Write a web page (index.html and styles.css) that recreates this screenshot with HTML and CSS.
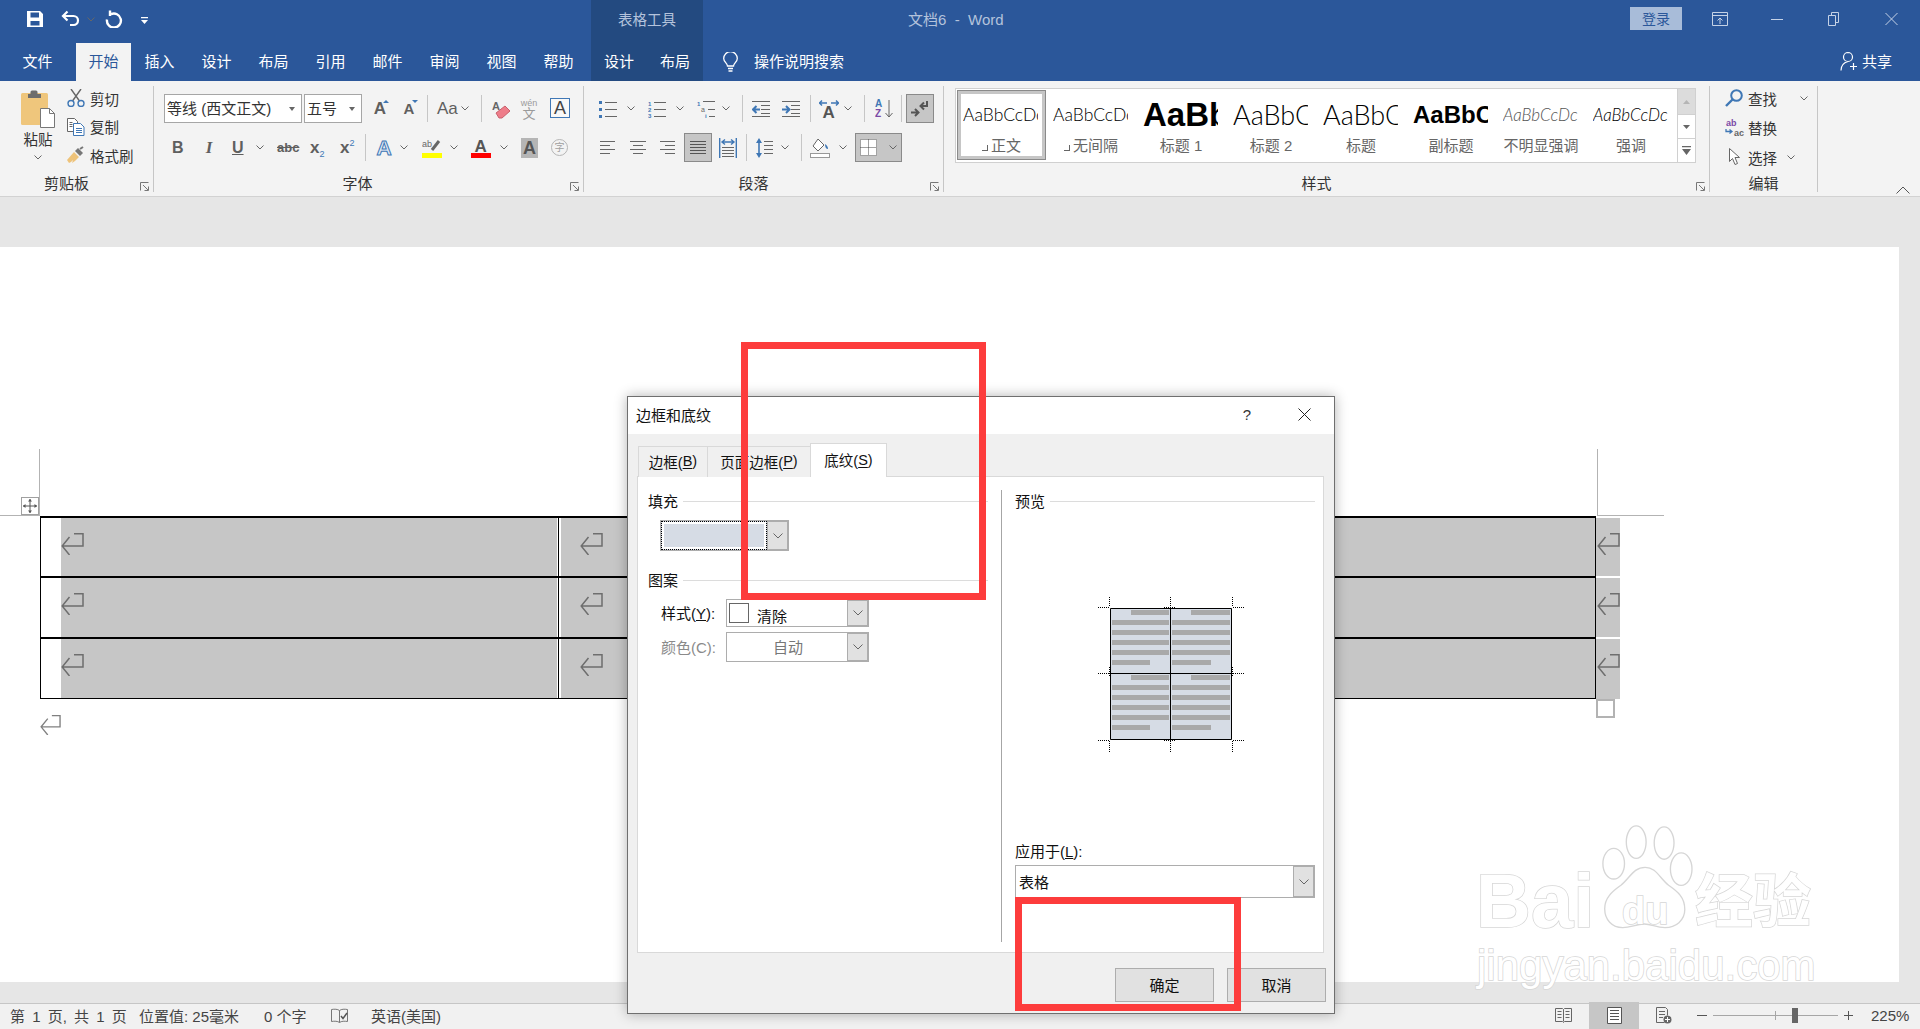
FILE: index.html
```html
<!DOCTYPE html>
<html lang="zh-CN">
<head>
<meta charset="utf-8">
<title>文档6 - Word</title>
<link rel="stylesheet" href="styles.css">
</head>
<body>
<header class="titlebar">
  <div class="qat">
    <svg class="qi-save" viewBox="0 0 16 16"><path fill="#fff" fill-rule="evenodd" d="M0 0h13l3 3v13H0zM3.5 1.5v5h8.500v-5zM3.500 10v4.500h9V10z"/></svg>
    <svg class="qi-undo" viewBox="0 0 19 17"><path fill="none" stroke="#fff" stroke-width="2.200" d="M6.500 1.500 2 6l4.500 4.500M2 6h10.500a4.500 4.500 0 0 1 0 9H9"/></svg>
    <svg class="chev chev-qat" viewBox="0 0 8 5"><path d="M.5.500 4 4 7.500.500"/></svg>
    <svg class="qi-redo" viewBox="0 0 18 18"><path fill="none" stroke="#fff" stroke-width="2.400" d="M6 4.200a7 7 0 1 1-4 5.300M5 .5v5.500"/></svg>
    <svg class="qi-more" viewBox="0 0 7 7"><path fill="#fff" d="M0 0h7v1.200H0zM0 3h7L3.500 7z"/></svg>
  </div>
  <div class="ctx-title">表格工具</div>
  <div class="doc-title">文档6 &nbsp;-&nbsp; Word</div>
  <div class="win">
    <button class="login">登录</button>
    <svg class="wi wi-disp" viewBox="0 0 16 16"><path fill="none" stroke="#c5d2e6" d="M.5 1.500h15v13H.5zM.5 4.500h15M8 13V7M5.500 9.500 8 7l2.500 2.500"/></svg>
    <svg class="wi wi-min" viewBox="0 0 12 16"><path stroke="#c5d2e6" d="M0 8.500h12"/></svg>
    <svg class="wi wi-res" viewBox="0 0 13 16"><path fill="none" stroke="#c5d2e6" d="M1.500 4.500h7v10h-7zM4.500 4.500v-3h7v10h-3"/></svg>
    <svg class="wi wi-close" viewBox="0 0 13 16"><path fill="none" stroke="#c5d2e6" d="M.5 2 12.500 14M12.500 2 .5 14"/></svg>
  </div>
</header>

<nav class="tabs">
  <a class="tab tab-file">文件</a>
  <a class="tab tab-active">开始</a>
  <a class="tab">插入</a>
  <a class="tab">设计</a>
  <a class="tab">布局</a>
  <a class="tab">引用</a>
  <a class="tab">邮件</a>
  <a class="tab">审阅</a>
  <a class="tab">视图</a>
  <a class="tab">帮助</a>
  <div class="ctx-tabs"><a class="ctx-tab">设计</a><a class="ctx-tab">布局</a></div>
  <svg class="bulb" viewBox="0 0 15 20"><path fill="none" stroke="#fff" stroke-width="1.300" d="M4.500 14c0-3-3.800-4-3.800-7.500a6.800 6.800 0 0 1 13.600 0C14.300 10 10.500 11 10.500 14zM5 16.500h5M5.500 19h4"/></svg>
  <span class="search">操作说明搜索</span>
  <div class="share">
    <svg class="share-ic" viewBox="0 0 17 20"><path fill="none" stroke="#fff" stroke-width="1.200" d="M8 1.500a4.500 4.500 0 0 1 0 9 4.500 4.500 0 0 1 0-9zM1 19.500c0-5 3-8 7-9M10 15.500h7M13.500 12v7"/></svg>
    <span>共享</span>
  </div>
</nav>

<section class="ribbon">
  <div class="group g-clip">
    <div class="clip-body">
      <div class="paste">
        <svg class="paste-ic" viewBox="0 0 34 38">
          <rect x="0" y="3" width="27" height="32" rx="1.500" fill="#efc67c"/>
          <path fill="#6d6d6d" d="M7 4h2.500V2a1.500 1.500 0 0 1 1.500-1.500h4A1.500 1.500 0 0 1 16.500 2v2H20v4H7z"/>
          <path fill="#fff" stroke="#777" d="M19.500 18.500h9l5 5v14h-14z"/>
          <path fill="none" stroke="#777" d="M28.500 18.500v5h5"/>
        </svg>
        <span class="paste-label">粘贴</span>
        <svg class="chev" viewBox="0 0 8 5"><path d="M.5.500 4 4 7.500.500"/></svg>
      </div>
      <div class="small-col">
        <div class="small-row">
          <svg class="sic" viewBox="0 0 18 18"><path fill="none" stroke="#666" stroke-width="1.400" d="M4 0l8.500 12M14 0 5.500 12"/><circle cx="4" cy="14.500" r="3" fill="none" stroke="#3f77b5" stroke-width="1.400"/><circle cx="14" cy="14.500" r="3" fill="none" stroke="#3f77b5" stroke-width="1.400"/></svg>
          <span>剪切</span>
        </div>
        <div class="small-row">
          <svg class="sic" viewBox="0 0 18 18"><path fill="#fff" stroke="#666" d="M.5.500h7l3 3v10H.5z"/><path fill="#fff" stroke="#3f77b5" d="M6.500 5.500h7l3.500 3.500v8.500H6.500z"/><path stroke="#3f77b5" d="M9 10.500h6M9 12.500h6M9 14.500h6"/><path stroke="#666" d="M2.500 4.500h3M2.500 6.500h3M2.500 8.500h3"/></svg>
          <span>复制</span>
        </div>
        <div class="small-row">
          <svg class="sic" viewBox="0 0 18 18"><path fill="#eec37a" d="M0 14 7 6l5 5-4 4-3 2 1-3-2 2-2 1z"/><path fill="#777" d="M8 5l3-3 5 5-3 3z"/><path stroke="#777" stroke-width="2" d="M13 3l3-2"/></svg>
          <span>格式刷</span>
        </div>
      </div>
    </div>
    <div class="glabel">剪贴板</div>
    <svg class="launch" viewBox="0 0 9 9"><path fill="none" stroke="#777" d="M.5 8.500v-8h8M3 3l5 5M8.500 4.500v4h-4"/></svg>
  </div>

  <div class="group g-font">
    <div class="rows">
      <div class="row">
        <div class="fcombo fc-name"><span>等线 (西文正文)</span><i class="tri"></i></div>
        <div class="fcombo fc-size"><span>五号</span><i class="tri"></i></div>
        <span class="gl w14 m11 gl-big">A<i class="mini-up"></i></span>
        <span class="gl w14 m15 gl-small">A<i class="mini-dn"></i></span>
        <i class="sep m11"></i>
        <span class="gl w18 m9 gl-aa">Aa</span>
        <svg class="chev m6" viewBox="0 0 8 5"><path d="M.5.500 4 4 7.500.500"/></svg>
        <i class="sep m12"></i>
        <svg class="ic w20 m10" viewBox="0 0 20 20"><text x="0" y="11" class="st-a">A</text><path fill="#ee7d8a" stroke="#c9606c" d="M4 14l9-7 5 5-8 7H7z"/></svg>
        <span class="wen m9"><small>wén</small>文</span>
        <span class="boxa m13">A</span>
      </div>
      <div class="row">
        <span class="gl gl-b w10 m8">B</span>
        <span class="gl gl-i w8 m23">I</span>
        <span class="gl gl-u w11 m19">U</span>
        <svg class="chev m13" viewBox="0 0 8 5"><path d="M.5.500 4 4 7.500.500"/></svg>
        <span class="gl-abc w20 m13">abc</span>
        <span class="gl-x w15 m13">x<sub>2</sub></span>
        <span class="gl-x w15 m15">x<sup>2</sup></span>
        <i class="sep m10"></i>
        <span class="a-fx w16 m10">A</span>
        <svg class="chev m8" viewBox="0 0 8 5"><path d="M.5.500 4 4 7.500.500"/></svg>
        <svg class="ic w20 m14" viewBox="0 0 20 20"><text x="0" y="9" class="st-ab">ab</text><path stroke="#666" stroke-width="3" d="M10 12 17 3"/><rect x="0" y="15" width="20" height="5" fill="#ffff00"/></svg>
        <svg class="chev m8" viewBox="0 0 8 5"><path d="M.5.500 4 4 7.500.500"/></svg>
        <svg class="ic w20 m13" viewBox="0 0 20 20"><text x="3.500" y="14" class="st-fc">A</text><rect x="0" y="15" width="20" height="5" fill="#ff0000"/></svg>
        <svg class="chev m9" viewBox="0 0 8 5"><path d="M.5.500 4 4 7.500.500"/></svg>
        <span class="a-shade m13">A</span>
        <span class="zi m13">字</span>
      </div>
    </div>
    <div class="glabel">字体</div>
    <svg class="launch" viewBox="0 0 9 9"><path fill="none" stroke="#777" d="M.5 8.500v-8h8M3 3l5 5M8.500 4.500v4h-4"/></svg>
  </div>

  <div class="group g-para">
    <div class="rows">
      <div class="row">
        <svg class="ic w18 m15" viewBox="0 0 18 18"><path fill="#3f77b5" d="M0 1h3v3H0zM0 8h3v3H0zM0 15h3v3H0z"/><path stroke="#666" d="M6 2.500h12M6 9.500h12M6 16.500h12"/></svg>
        <svg class="chev m10" viewBox="0 0 8 5"><path d="M.5.500 4 4 7.500.500"/></svg>
        <svg class="ic w18 m13" viewBox="0 0 18 18"><text x="0" y="5.500" class="st-n">1</text><text x="0" y="12" class="st-n">2</text><text x="0" y="18" class="st-n">3</text><path stroke="#666" d="M6 2.500h12M6 9.500h12M6 16.500h12"/></svg>
        <svg class="chev m10" viewBox="0 0 8 5"><path d="M.5.500 4 4 7.500.500"/></svg>
        <svg class="ic w18 m13" viewBox="0 0 18 18"><text x="0" y="5.500" class="st-n">1</text><text x="4" y="12" class="st-n2">a</text><text x="8" y="18" class="st-n">i</text><path stroke="#666" d="M6 1.500h12M11 9.500h7M12 16.500h6"/></svg>
        <svg class="chev m7" viewBox="0 0 8 5"><path d="M.5.500 4 4 7.500.500"/></svg>
        <i class="sep m12"></i>
        <svg class="ic w18 m9" viewBox="0 0 18 18"><path stroke="#666" d="M0 1.500h18M9 5.500h9M9 9.500h9M9 13.500h9M0 16.500h18"/><path fill="none" stroke="#3f77b5" stroke-width="2" d="M8 9.500H1M4.500 6 1 9.500 4.500 13"/></svg>
        <svg class="ic w18 m12" viewBox="0 0 18 18"><path stroke="#666" d="M0 1.500h18M9 5.500h9M9 9.500h9M9 13.500h9M0 16.500h18"/><path fill="none" stroke="#3f77b5" stroke-width="2" d="M0 9.500h7M4 6l3.500 3.500L4 13"/></svg>
        <i class="sep m10"></i>
        <svg class="ic w20 m8" viewBox="0 0 20 20"><text x="3.500" y="18.500" class="st-big">A</text><path fill="none" stroke="#3f77b5" stroke-width="1.500" d="M0 4h8M3 1.500.5 4 3 6.500M12 4h8M17 1.500 19.500 4 17 6.500"/></svg>
        <svg class="chev m5" viewBox="0 0 8 5"><path d="M.5.500 4 4 7.500.500"/></svg>
        <i class="sep m12"></i>
        <svg class="ic w18 m10" viewBox="0 0 18 20"><text x="0" y="8" class="st-az1">A</text><text x="0" y="18" class="st-az2">Z</text><path fill="none" stroke="#666" d="M14 1v17M10.500 14 14 18l3.500-4"/></svg>
        <i class="sep m8"></i>
        <span class="tog tog-p m4"><svg class="ic w18" viewBox="0 0 18 18"><path fill="none" stroke="#555" stroke-width="2" d="M9 6h7V1M16 6h-4M13 2.500 9.500 6 13 9.500M0 12.500h7M4 9l3.500 3.500L4 16"/></svg></span>
      </div>
      <div class="row">
        <svg class="ic w15 m16" viewBox="0 0 15 15"><path stroke="#666" d="M0 1.500h15M0 5.500h10M0 9.500h15M0 13.500h10"/></svg>
        <svg class="ic w16 m15" viewBox="0 0 16 15"><path stroke="#666" d="M0 1.500h16M3 5.500h10M0 9.500h16M3 13.500h10"/></svg>
        <svg class="ic w15 m14" viewBox="0 0 15 15"><path stroke="#666" d="M0 1.500h15M5 5.500h10M0 9.500h15M5 13.500h10"/></svg>
        <span class="tog tog-j m9"><svg class="ic w16" viewBox="0 0 16 15"><path stroke="#555" d="M0 1.500h16M0 4.500h16M0 7.500h16M0 10.500h16M0 13.500h16"/></svg></span>
        <svg class="ic w18 m7" viewBox="0 0 18 20"><path stroke="#3f77b5" stroke-width="1.400" fill="none" d="M.7 0v20M17.300 0v20M3 4h12M6 1.500 3 4l3 2.500M12 1.500 15 4l-3 2.500"/><path stroke="#666" d="M3 9.500h12M3 12.500h12M3 15.500h12M3 18.500h12"/></svg>
        <i class="sep m9"></i>
        <svg class="ic w17 m9" viewBox="0 0 17 20"><path fill="#3f77b5" d="M3 0l3 5H0zM3 20l3-5H0z"/><path stroke="#3f77b5" stroke-width="1.600" d="M3 4v12"/><path stroke="#666" d="M8 3.500h9M8 7.500h9M8 11.500h9M8 15.500h9"/></svg>
        <svg class="chev m8" viewBox="0 0 8 5"><path d="M.5.500 4 4 7.500.500"/></svg>
        <i class="sep m12"></i>
        <svg class="ic w20 m8" viewBox="0 0 20 20"><path fill="#fff" stroke="#666" d="M8 1l6 6-6 6-5-5z"/><path fill="#3f77b5" d="M15 6c2 1 3 3 3 5-2 0-3-2-3-5z"/><rect x=".5" y="15.500" width="19" height="4" fill="#fff" stroke="#999"/></svg>
        <svg class="chev m9" viewBox="0 0 8 5"><path d="M.5.500 4 4 7.500.500"/></svg>
        <span class="tog tog-b m8"><svg class="ic w17" viewBox="0 0 17 17"><rect width="17" height="17" fill="#fff"/><path fill="none" stroke="#444" stroke-dasharray="1 1" d="M.5.500h16v16H.5zM8.500.500v16M.5 8.500h16"/></svg><svg class="chev" viewBox="0 0 8 5"><path d="M.5.500 4 4 7.500.500"/></svg></span>
      </div>
    </div>
    <div class="glabel">段落</div>
    <svg class="launch" viewBox="0 0 9 9"><path fill="none" stroke="#777" d="M.5 8.500v-8h8M3 3l5 5M8.500 4.500v4h-4"/></svg>
  </div>

  <div class="group g-styles">
    <div class="gallery">
      <div class="style sel"><div class="pv pv-n">AaBbCcDc</div><div class="lab"><i class="rm"></i>正文</div></div>
      <div class="style"><div class="pv pv-n">AaBbCcDc</div><div class="lab"><i class="rm"></i>无间隔</div></div>
      <div class="style"><div class="pv pv-h1">AaBb</div><div class="lab">标题 1</div></div>
      <div class="style"><div class="pv pv-h2">AaBbC</div><div class="lab">标题 2</div></div>
      <div class="style"><div class="pv pv-h2">AaBbC</div><div class="lab">标题</div></div>
      <div class="style"><div class="pv pv-sub">AaBbC</div><div class="lab">副标题</div></div>
      <div class="style"><div class="pv pv-em pv-grey">AaBbCcDc</div><div class="lab">不明显强调</div></div>
      <div class="style"><div class="pv pv-em">AaBbCcDc</div><div class="lab">强调</div></div>
      <div class="gscroll">
        <span class="gs gs-up"><svg viewBox="0 0 7 4"><path fill="#b5b5b5" d="M3.500 0 7 4H0z"/></svg></span>
        <span class="gs gs-dn"><svg viewBox="0 0 7 4"><path fill="#666" d="M0 0h7L3.500 4z"/></svg></span>
        <span class="gs gs-more"><svg viewBox="0 0 9 9"><path fill="#666" d="M0 0h9v1.200H0zM0 3h9L4.500 9z"/></svg></span>
      </div>
    </div>
    <div class="glabel">样式</div>
    <svg class="launch" viewBox="0 0 9 9"><path fill="none" stroke="#777" d="M.5 8.500v-8h8M3 3l5 5M8.500 4.500v4h-4"/></svg>
  </div>

  <div class="group g-edit">
    <div class="edit-col">
      <div class="small-row">
        <svg class="sic" viewBox="0 0 18 18"><circle cx="11.500" cy="6.500" r="5.300" fill="none" stroke="#3f77b5" stroke-width="2"/><path stroke="#3f77b5" stroke-width="2.400" d="M7.500 10.500 1 17"/></svg>
        <span>查找</span><svg class="chev m18" viewBox="0 0 8 5"><path d="M.5.500 4 4 7.500.500"/></svg>
      </div>
      <div class="small-row">
        <svg class="sic sic-rep" viewBox="0 0 20 19"><text x="1" y="8" class="st-rp">ab</text><text x="9" y="18" class="st-rb">ac</text><path fill="none" stroke="#3f77b5" stroke-width="1.300" d="M1 11v2.500h6M4.500 11.500l2.500 2-2.500 2"/></svg>
        <span>替换</span>
      </div>
      <div class="small-row">
        <svg class="sic" viewBox="0 0 18 18"><path fill="#fff" stroke="#666" d="M4.500.500v13l3-3 2.500 6 2.500-1-2.500-6h4.500z"/></svg>
        <span>选择</span><svg class="chev m5" viewBox="0 0 8 5"><path d="M.5.500 4 4 7.500.500"/></svg>
      </div>
    </div>
    <div class="glabel">编辑</div>
  </div>
  <svg class="collapse" viewBox="0 0 14 8"><path fill="none" stroke="#555" d="M.5 7.500 7 1l6.500 6.500"/></svg>
</section>

<main class="canvas">
  <div class="page">
    <i class="mark mark-lv"></i><i class="mark mark-lh"></i>
    <i class="mark mark-rv"></i><i class="mark mark-rh"></i>
    <span class="move"><svg viewBox="0 0 14 14"><path fill="none" stroke="#555" d="M7 0v14M0 7h14"/><path fill="#555" d="M7 0l2 2.500H5zM7 14l2-2.500H5zM0 7l2.500-2v4zM14 7l-2.500-2v4z"/></svg></span>
    <div class="tbl">
      <div class="trow r1">
        <div class="cell c1"><div class="shade"><svg class="ret" viewBox="0 0 23 22"><path d="M13 .7h9V13H1.500M8.500 4 1.200 13l7.300 9"/></svg></div></div>
        <div class="cell c2"><div class="shade"><svg class="ret" viewBox="0 0 23 22"><path d="M13 .7h9V13H1.500M8.500 4 1.200 13l7.300 9"/></svg></div></div>
        <div class="cell c3"><div class="shade"></div></div>
        <div class="endc"><svg class="ret" viewBox="0 0 23 22"><path d="M13 .7h9V13H1.500M8.500 4 1.200 13l7.300 9"/></svg></div>
      </div>
      <div class="trow r2">
        <div class="cell c1"><div class="shade"><svg class="ret" viewBox="0 0 23 22"><path d="M13 .7h9V13H1.500M8.500 4 1.200 13l7.300 9"/></svg></div></div>
        <div class="cell c2"><div class="shade"><svg class="ret" viewBox="0 0 23 22"><path d="M13 .7h9V13H1.500M8.500 4 1.200 13l7.300 9"/></svg></div></div>
        <div class="cell c3"><div class="shade"></div></div>
        <div class="endc"><svg class="ret" viewBox="0 0 23 22"><path d="M13 .7h9V13H1.500M8.500 4 1.200 13l7.300 9"/></svg></div>
      </div>
      <div class="trow r3">
        <div class="cell c1"><div class="shade"><svg class="ret" viewBox="0 0 23 22"><path d="M13 .7h9V13H1.500M8.500 4 1.200 13l7.300 9"/></svg></div></div>
        <div class="cell c2"><div class="shade"><svg class="ret" viewBox="0 0 23 22"><path d="M13 .7h9V13H1.500M8.500 4 1.200 13l7.300 9"/></svg></div></div>
        <div class="cell c3"><div class="shade"></div></div>
        <div class="endc"><svg class="ret" viewBox="0 0 23 22"><path d="M13 .7h9V13H1.500M8.500 4 1.200 13l7.300 9"/></svg></div>
      </div>
      <i class="resize"></i>
    </div>
    <svg class="ret ret-after" viewBox="0 0 23 22"><path d="M13 .7h9V13H1.500M8.500 4 1.200 13l7.300 9"/></svg>
  </div>
</main>

<footer class="status">
  <span class="st st1">第 1 页, 共 1 页</span>
  <span class="st st2">位置值: 25毫米</span>
  <span class="st st3">0 个字</span>
  <svg class="st-proof" viewBox="0 0 18 16"><path fill="none" stroke="#777" d="M8.500 2.500c-2-1.500-5-1.500-8-1v12c3-.5 6-.5 8 1 2-1.500 5-1.500 8-1v-12c-3-.5-6-.5-8 1zM8.500 2.500v12"/><path fill="none" stroke="#555" stroke-width="1.500" d="M10 8l2 2.500L16 5"/></svg>
  <span class="st st4">英语(美国)</span>
  <div class="st-right">
    <svg class="vi vi-read" viewBox="0 0 17 17"><path fill="none" stroke="#666" d="M.5 1.500h7l1 1 1-1h7v13h-7l-1 1-1-1h-7zM8.500 2.500v12M2.500 4.500h4M2.500 7.500h4M2.500 10.500h4M10.500 4.500h4M10.500 7.500h4M10.500 10.500h4"/></svg>
    <span class="vbtn"><svg class="vi" viewBox="0 0 17 17"><path fill="#fff" stroke="#555" d="M1.500.5h14v16h-14z"/><path stroke="#555" d="M4 3.500h9M4 6.500h9M4 9.500h9M4 12.500h9"/></svg></span>
    <svg class="vi vi-web" viewBox="0 0 16 17"><path fill="none" stroke="#666" d="M.5.500h9l2 2v6M.5.500v15h8M3 4.500h6M3 7.500h6M3 10.500h4"/><circle cx="11.500" cy="12.500" r="4" fill="#666"/><path stroke="#fff" d="M9 12.500h5M11.500 10v5"/></svg>
    <span class="z-minus"></span>
    <div class="z-track"><i class="z-mid"></i><i class="z-thumb"></i></div>
    <span class="z-plus"></span>
    <span class="z-val">225%</span>
  </div>
</footer>

<div class="watermark" aria-hidden="true">
  <svg class="wm-paw" viewBox="0 0 100 120">
    <g fill="#fff" stroke="#d6d6d6" stroke-width="1.500">
      <ellipse cx="13" cy="43" rx="12" ry="17"/>
      <ellipse cx="38" cy="19" rx="11" ry="18"/>
      <ellipse cx="69" cy="20" rx="11" ry="18"/>
      <ellipse cx="88" cy="49" rx="12" ry="18"/>
      <path d="M48 47c12 0 16 12 26 20 10 7 18 13 18 27 0 12-10 20-22 20-10 0-15-4-23-4-9 0-15 4-24 4C11 114 3 105 3 93c0-12 8-19 18-26 10-8 14-20 27-20z"/>
    </g>
  </svg>
  <span class="wm-bai">Bai</span>
  <span class="wm-du">du</span>
  <span class="wm-cn">经验</span>
  <span class="wm-url">jingyan.baidu.com</span>
</div>

<section class="dialog" role="dialog">
  <div class="dlg-title">
    <span>边框和底纹</span>
    <span class="dlg-help">?</span>
    <svg class="dlg-x" viewBox="0 0 13 13"><path fill="none" stroke="#222" d="M.5.500 12.500 12.500M12.500.500.5 12.500"/></svg>
  </div>
  <div class="dlg-tabs">
    <span class="dtab dtab-1">边框(<u>B</u>)</span>
    <span class="dtab dtab-2">页面边框(<u>P</u>)</span>
    <span class="dtab dtab-3">底纹(<u>S</u>)</span>
  </div>
  <div class="panel">
    <div class="p-left">
      <div class="sect"><span>填充</span><i></i></div>
      <div class="fill-combo"><span class="fill-swatch"></span><span class="drop"><svg class="dchev" viewBox="0 0 10 6"><path d="M.5.500 5 5 9.500.500"/></svg></span></div>
      <div class="sect sect-2"><span>图案</span><i></i></div>
      <div class="frow frow-style">
        <label>样式(<u>Y</u>):</label>
        <div class="combo combo-style"><i class="box"></i><span class="combo-text">清除</span><span class="drop"><svg class="dchev" viewBox="0 0 10 6"><path d="M.5.500 5 5 9.500.500"/></svg></span></div>
      </div>
      <div class="frow frow-color">
        <label class="dis">颜色(C):</label>
        <div class="combo combo-color"><span class="combo-auto">自动</span><span class="drop"><svg class="dchev" viewBox="0 0 10 6"><path d="M.5.500 5 5 9.500.500"/></svg></span></div>
      </div>
    </div>
    <div class="p-right">
      <div class="sect"><span>预览</span><i></i></div>
      <svg class="preview" viewBox="0 0 146 156">
        <rect x="12.500" y="11.500" width="121" height="131" fill="#d6dce5"/>
        <path fill="#a9a9a9" d="M33 13h38v5H33zM14 23h57v5H14zM14 33h57v5H14zM14 43h57v5H14zM14 53h57v5H14zM14 63h38v5H14zM93 13h39v5H93zM74 23h58v5H74zM74 33h58v5H74zM74 43h58v5H74zM74 53h58v5H74zM74 63h39v5H74zM33 78h38v5H33zM14 88h57v5H14zM14 98h57v5H14zM14 108h57v5H14zM14 118h57v5H14zM14 128h38v5H14zM93 78h39v5H93zM74 88h58v5H74zM74 98h58v5H74zM74 108h58v5H74zM74 118h58v5H74zM74 128h39v5H74z"/>
        <path fill="none" stroke="#000" d="M12.500 11.500h121v131h-121zM72.500 11.500v131M12.500 76.500h121"/>
        <path fill="none" stroke="#000" stroke-dasharray="1 1" d="M0 10.500h11M11.500 0v10M66 10.500h11M72.500 0v10M135 10.500h11M134.500 0v10M0 76.500h11M11.500 70v10M135 76.500h11M134.500 70v10M0 143.500h11M11.500 144v11M66 143.500h11M72.500 144v11M135 143.500h11M134.500 144v11"/>
      </svg>
      <label class="apply-label">应用于(<u>L</u>):</label>
      <div class="combo combo-apply"><span class="combo-text2">表格</span><span class="drop"><svg class="dchev" viewBox="0 0 10 6"><path d="M.5.500 5 5 9.500.500"/></svg></span></div>
    </div>
  </div>
  <div class="dlg-foot">
    <button class="btn">确定</button>
    <button class="btn">取消</button>
  </div>
</section>

<i class="redbox redbox-1"></i>
<i class="redbox redbox-2"></i>
</body>
</html>
```
FILE: styles.css
```css
* { box-sizing: border-box; }
html, body { margin: 0; padding: 0; }
body {
  position: relative;
  width: 1920px;
  height: 1029px;
  overflow: hidden;
  display: flex;
  flex-direction: column;
  font-family: "Liberation Sans", "Noto Sans CJK SC", sans-serif;
  font-size: 15px;
  color: #333;
  background: #e6e6e6;
}
svg { display: block; flex: none; }
i { font-style: normal; }

/* title bar */
.titlebar { height: 43px; background: #2b579a; display: flex; align-items: stretch; flex: none; color: #b4c3dc; font-size: 14.500px; }
.qat { width: 591px; display: flex; align-items: center; padding-left: 27px; }
.qi-save { width: 16px; height: 16px; margin-top: -6px; }
.qi-undo { width: 19px; height: 17px; margin-left: 18px; margin-top: -6px; }
.chev-qat { margin-left: 7px; margin-top: -4px; }
.chev-qat path { stroke: #8fa6c8; }
.qi-redo { width: 18px; height: 18px; margin-left: 10px; margin-top: -6px; }
.qi-more { width: 7px; height: 7px; margin-left: 18px; margin-top: -2px; }
.ctx-title { width: 112px; background: #234a80; display: flex; align-items: center; justify-content: center; padding-bottom: 6px; }
.doc-title { margin-left: 205px; display: flex; align-items: center; padding-bottom: 6px; white-space: pre; font-size: 15px; }
.win { margin-left: auto; padding-right: 22px; display: flex; align-items: center; padding-bottom: 6px; }
.login { width: 52px; height: 23px; border: 0; padding: 0 0 2px; background: #a8bcd9; color: #2b579a; font: inherit; font-size: 14px; }
.wi { height: 16px; }
.wi-disp { width: 16px; margin-left: 30px; }
.wi-min { width: 12px; margin-left: 43px; }
.wi-res { width: 13px; margin-left: 44px; }
.wi-close { width: 13px; margin-left: 45px; }

/* tabs */
.tabs { height: 38px; background: #2b579a; display: flex; flex: none; color: #fff; }
.tab { width: 57px; display: flex; align-items: center; justify-content: center; padding-bottom: 3px; }
.tab-file { width: 57px; margin-left: 9px; margin-right: 10px; }
.tab-active { width: 55px; background: #f3f3f3; color: #2b579a; margin-right: 0; }
.ctx-tabs { display: flex; width: 112px; margin-left: 4px; background: #234a80; }
.ctx-tab { width: 56px; display: flex; align-items: center; justify-content: center; padding-bottom: 3px; }
.bulb { width: 15px; height: 20px; margin-left: 20px; margin-top: 9px; }
.search { margin-left: 16px; align-self: center; font-size: 15px; padding-bottom: 3px; }
.share { margin-left: auto; padding-right: 28px; display: flex; align-items: center; gap: 5px; padding-bottom: 3px; }
.share-ic { width: 17px; height: 20px; }

/* ribbon */
.ribbon { position: relative; height: 116px; background: #f3f3f3; border-bottom: 1px solid #d2d2d2; display: flex; flex: none; padding-top: 5px; padding-bottom: 4px; font-size: 14.500px; }
.group { position: relative; display: flex; flex-direction: column; height: 106px; border-right: 1px solid #c6c6c6; }
.g-clip { width: 154px; }
.g-font { width: 430px; }
.g-para { width: 360px; }
.g-styles { width: 766px; }
.g-edit { width: 108px; }
.glabel { height: 14px; line-height: 12px; text-align: center; flex: none; margin-top: auto; color: #333; font-size: 15px; }
.g-clip .glabel { padding-right: 20px; }
.g-font .glabel { padding-right: 22px; }
.g-para .glabel { padding-right: 20px; }
.g-styles .glabel { padding-right: 20px; }
.launch { position: absolute; right: 4px; bottom: 1px; width: 9px; height: 9px; }
.collapse { position: absolute; left: 1896px; top: 105px; width: 14px; height: 8px; }

.clip-body { display: flex; }
.paste { width: 58px; margin-left: 9px; padding-top: 4px; display: flex; flex-direction: column; align-items: center; }
.paste-ic { width: 34px; height: 38px; }
.paste-label { margin-top: 3px; line-height: 18px; }
.paste .chev { margin-top: 6px; }
.small-col { display: flex; flex-direction: column; gap: 4.500px; }
.edit-col { padding-top: 0; padding-left: 15px; display: flex; flex-direction: column; gap: 5.500px; }
.small-row { height: 24px; display: flex; align-items: center; gap: 5px; white-space: nowrap; }
.sic { width: 18px; height: 18px; }
.sic-rep { width: 20px; height: 19px; margin-right: -2px; }

.chev { width: 8px; height: 5px; }
.chev path, .dchev path { fill: none; stroke: #666; }

.rows { padding-top: 8px; display: flex; flex-direction: column; gap: 10px; }
.row { height: 29px; display: flex; align-items: center; padding-left: 10px; }
.g-para .row { padding-left: 0; }
.sep { width: 1px; height: 27px; background: #c6c6c6; flex: none; }
.w8 { width: 8px; } .w10 { width: 10px; } .w11 { width: 11px; } .w14 { width: 14px; } .w15 { width: 15px; }
.w16 { width: 16px; } .w17 { width: 17px; } .w18 { width: 18px; } .w20 { width: 20px; }
.m4 { margin-left: 4px; } .m5 { margin-left: 5px; } .m6 { margin-left: 6px; } .m7 { margin-left: 7px; }
.m8 { margin-left: 8px; } .m9 { margin-left: 9px; } .m10 { margin-left: 10px; } .m11 { margin-left: 11px; }
.m12 { margin-left: 12px; } .m13 { margin-left: 13px; } .m14 { margin-left: 14px; } .m15 { margin-left: 15px; }
.m16 { margin-left: 16px; } .m18 { margin-left: 18px; } .m19 { margin-left: 19px; } .m23 { margin-left: 23px; }

.fcombo { height: 29px; background: #fff; border: 1px solid #a6a6a6; display: flex; align-items: center; padding: 0 6px 2px 2px; justify-content: space-between; white-space: nowrap; font-size: 15px; }
.fc-name { width: 138px; margin-right: 2px; }
.fc-size { width: 58px; }
.tri { width: 0; height: 0; margin-top: 2px; border-left: 3.500px solid transparent; border-right: 3.500px solid transparent; border-top: 4px solid #666; }
.gl { position: relative; display: block; text-align: center; color: #5f5f5f; font-weight: bold; line-height: 20px; }
.gl-big { font-size: 17px; }
.gl-small { font-size: 15px; }
.mini-up, .mini-dn { position: absolute; right: -2px; top: 1px; width: 0; height: 0; border-left: 3px solid transparent; border-right: 3px solid transparent; }
.mini-up { border-bottom: 3px solid #3f77b5; }
.mini-dn { border-top: 3px solid #3f77b5; }
.gl-aa { font-weight: normal; font-size: 17px; white-space: nowrap; }
.wen { width: 16px; display: flex; flex-direction: column; align-items: center; color: #9a9a9a; font-size: 13px; line-height: 11px; }
.wen small { font-size: 9px; line-height: 9px; }
.boxa { width: 20px; height: 20px; border: 1px solid #3f77b5; background: #f8f8f8; color: #444; text-align: center; font-size: 18px; line-height: 18px; margin-top: -2px; }
.gl-b { font-size: 16px; font-family: "Liberation Sans", sans-serif; }
.gl-i { font-size: 17px; font-family: "Liberation Serif", serif; font-style: italic; }
.gl-u { font-size: 16px; text-decoration: underline; }
.gl-abc { display: block; font-size: 13px; color: #5f5f5f; font-weight: bold; text-decoration: line-through; text-align: center; }
.gl-x { display: block; color: #5f5f5f; font-weight: bold; font-size: 17px; line-height: 20px; white-space: nowrap; }
.gl-x sub, .gl-x sup { font-size: 9px; color: #3f77b5; font-weight: normal; line-height: 0; }
.a-fx { display: block; font-size: 21px; font-weight: bold; color: #dfeaf6; line-height: 20px; text-align: center; -webkit-text-stroke: 1px #3f77b5; }
.a-shade { width: 17px; height: 20px; background: #b5b5b5; color: #555; font-weight: bold; font-size: 18px; line-height: 20px; text-align: center; }
.zi { width: 17px; height: 17px; border: 1px solid #b5b5b5; border-radius: 50%; color: #a0a0a0; font-size: 10px; line-height: 15px; text-align: center; }
.st-a { font: bold 11px "Liberation Sans", sans-serif; fill: #666; }
.st-ab { font: 9px "Liberation Sans", sans-serif; fill: #666; }
.st-fc { font: bold 17px "Liberation Sans", sans-serif; fill: #555; }
.st-n { font: bold 6px "Liberation Sans", sans-serif; fill: #3f77b5; }
.st-n2 { font: 7px "Liberation Sans", sans-serif; fill: #666; }
.st-big { font: bold 17px "Liberation Sans", sans-serif; fill: #555; }
.st-az1 { font: bold 10px "Liberation Sans", sans-serif; fill: #3f77b5; }
.st-az2 { font: bold 10px "Liberation Sans", sans-serif; fill: #7b4aa6; }
.st-rp { font: bold 9px "Liberation Sans", sans-serif; fill: #7b4aa6; }
.st-rb { font: bold 9px "Liberation Sans", sans-serif; fill: #666; }

.tog { height: 29px; background: #c6c6c6; border: 1px solid #8a8a8a; display: flex; align-items: center; justify-content: center; flex: none; }
.tog-p, .tog-j { width: 28px; }
.tog-b { width: 47px; gap: 12px; }

/* gallery */
.gallery { margin: 2px 0 0 11px; width: 741px; height: 75px; background: #fff; border: 1px solid #d0d0d0; display: flex; }
.style { width: 90px; height: 70px; margin-top: 1px; padding: 0 7px; overflow: hidden; flex: none; }
.style.sel { border: 4px solid #c6c6c6; outline: 1px solid #8a8a8a; outline-offset: -1px; padding: 0 2px; margin-left: 1px; width: 89px; height: 70px; }
.pv { height: 46px; width: 75px; line-height: 50px; overflow: hidden; white-space: nowrap; color: #000; font-family: Lato, "Liberation Sans", sans-serif; font-weight: 300; }
.sel .pv { height: 42px; line-height: 42px; width: 75px; }
.pv-n { font-size: 17.500px; }
.pv-h1 { font-family: "Liberation Sans", sans-serif; font-size: 33px; font-weight: bold; }
.pv-h2 { font-size: 27px; }
.pv-sub { font-family: "Liberation Sans", sans-serif; font-size: 24px; font-weight: bold; }
.pv-em { font-size: 17px; font-style: italic; }
.pv-grey { color: #555; }
.lab { height: 20px; line-height: 18px; text-align: center; color: #666; display: flex; justify-content: center; align-items: center; gap: 3px; white-space: nowrap; font-size: 15px; }
.rm { width: 6px; height: 6px; border-right: 1px solid #666; border-bottom: 1px solid #666; margin-top: 3px; }
.gscroll { width: 18px; margin-left: auto; display: flex; flex-direction: column; border-left: 1px solid #d0d0d0; flex: none; }
.gs { display: flex; align-items: center; justify-content: center; border-bottom: 1px solid #d0d0d0; }
.gs svg { width: 7px; height: 4px; }
.gs-up { height: 26px; background: #dcdcdc; }
.gs-dn { height: 24px; }
.gs-more { height: 23px; border-bottom: 0; }
.gs-more svg { width: 9px; height: 9px; }

/* canvas & page */
.canvas { flex: 1; padding-top: 50px; background: #e6e6e6; min-height: 0; }
.page { position: relative; width: 1899px; height: 735px; background: #fff; padding: 269px 0 0 40px; }
.mark { position: absolute; background: #b3b3b3; }
.mark-lv { left: 39px; top: 202px; width: 1px; height: 66px; }
.mark-lh { left: 0; top: 268px; width: 40px; height: 1px; }
.mark-rv { left: 1597px; top: 202px; width: 1px; height: 66px; }
.mark-rh { left: 1597px; top: 268px; width: 67px; height: 1px; }
.move { position: absolute; left: 21px; top: 250px; width: 18px; height: 18px; background: #fff; border: 1px solid #a0a0a0; padding: 1px; }
.move svg { width: 14px; height: 14px; }
.tbl { position: relative; width: 1580px; }
.trow { display: grid; grid-template-columns: 519px 519px 518px 24px; }
.r1 { height: 60px; }
.r2 { height: 61px; }
.r3 { height: 61px; }
.cell { border-top: 2px solid #000; border-right: 1px solid #000; background: #fff; display: flex; }
.r3 .cell { border-bottom: 1px solid #000; }
.c1 { border-left: 1px solid #000; padding-left: 20px; }
.shade { flex: 1; background: #c6c6c6; margin-right: 1px; padding-top: 15px; }
.c2 .shade { margin-left: 2px; padding-left: 19px; }
.c3 .shade { margin-left: 2px; margin-right: 0; }
.ret { width: 23px; height: 22px; }
.ret path { fill: none; stroke: #6e6e6e; stroke-width: 1.500; }
.endc { margin-top: 2px; background: #c6c6c6; padding: 15px 0 0 1px; overflow: hidden; }
.r3 .endc { height: 60px; }
.resize { position: absolute; left: 1556px; top: 183px; width: 19px; height: 19px; background: #fff; border: 2px solid #b3b3b3; }
.ret-after { width: 21px; height: 20px; margin-top: 17px; }
.ret-after path { stroke: #808080; }

/* status bar */
.status { height: 26px; flex: none; background: #f1f1f1; border-top: 1px solid #c6c6c6; display: flex; align-items: center; padding: 0 0 2px 10px; font-size: 15px; color: #444; white-space: pre; }
.st1 { width: 129px; word-spacing: 3px; }
.st2 { width: 125px; }
.st3 { width: 67px; }
.st-proof { width: 18px; height: 16px; margin-right: 22px; }
.st-right { margin-left: auto; padding-right: 10px; display: flex; align-items: center; height: 100%; }
.vi { width: 17px; height: 17px; }
.vbtn { width: 50px; height: 27px; background: #c6c6c6; margin-left: 17px; display: flex; align-items: center; justify-content: center; }
.vi-web { width: 16px; margin-left: 17px; }
.z-minus { width: 10px; height: 1px; background: #555; margin-left: 25px; }
.z-track { position: relative; width: 125px; height: 1px; background: #a6a6a6; margin-left: 6px; }
.z-mid { position: absolute; left: 62px; top: -4px; width: 1px; height: 9px; background: #a6a6a6; }
.z-thumb { position: absolute; left: 79px; top: -7px; width: 6px; height: 15px; background: #666; }
.z-plus { position: relative; width: 9px; height: 1px; background: #555; margin-left: 6px; }
.z-plus::after { content: ""; position: absolute; left: 4px; top: -4px; width: 1px; height: 9px; background: #555; }
.z-val { margin-left: 18px; width: 39px; }

/* watermark */
.watermark { position: absolute; left: 1476px; top: 825px; width: 340px; height: 165px; pointer-events: none; }
.wm-paw { position: absolute; left: 125px; top: 0; width: 92px; height: 108px; }
.wm-bai, .wm-du, .wm-cn, .wm-url { position: absolute; color: #fff; -webkit-text-stroke: 1.500px #d6d6d6; paint-order: stroke fill; white-space: nowrap; }
.wm-bai { left: 0; top: 36px; font-size: 76px; line-height: 80px; font-weight: bold; }
.wm-du { left: 146px; top: 66px; font-size: 38px; line-height: 40px; font-weight: bold; }
.wm-cn { left: 219px; top: 42px; font-size: 58px; line-height: 70px; font-weight: bold; }
.wm-url { left: 1px; top: 116px; font-size: 42px; line-height: 50px; }

/* dialog */
.dialog { position: absolute; z-index: 0; left: 627px; top: 396px; width: 708px; height: 618px; background: #f0f0f0; border: 1px solid #6f6f6f; box-shadow: 0 0 12px rgba(0, 0, 0, .3); display: flex; flex-direction: column; color: #111; font-size: 14.500px; }
.dlg-title { height: 37px; background: #fff; display: flex; align-items: center; padding: 0 0 2px 8px; flex: none; font-size: 15px; }
.dlg-help { margin-left: auto; color: #333; font-size: 15px; }
.dlg-x { width: 13px; height: 13px; margin-left: 47px; margin-right: 23px; }
.dlg-tabs { height: 43px; padding-left: 10px; display: flex; align-items: flex-end; flex: none; position: relative; z-index: 1; margin-bottom: -1px; }
.dtab { display: flex; align-items: center; justify-content: center; white-space: pre; height: 31px; padding-bottom: 2px; background: #f0f0f0; border: 1px solid #d9d9d9; border-bottom: 0; border-left-width: 0; }
.dtab u { text-underline-offset: 2px; }
.dtab-1 { width: 70px; border-left-width: 1px; }
.dtab-2 { width: 103px; }
.dtab-3 { width: 77px; height: 34px; background: #fff; border-left-width: 1px; margin-left: -1px; }
.panel { margin-left: 9px; width: 687px; height: 477px; background: #fff; border: 1px solid #d9d9d9; padding-top: 13px; padding-bottom: 10px; display: grid; grid-template-columns: 363px 1fr; flex: none; }
.p-left { padding-left: 10px; padding-right: 13px; }
.p-right { border-left: 1px solid #a6a6a6; padding: 0 9px 0 13px; }
.sect { height: 22px; display: flex; align-items: center; gap: 5px; font-size: 15px; }
.sect span { margin-bottom: 2px; }
.sect i { flex: 1; height: 1px; background: #dcdcdc; }
.sect-2 { margin-top: 18px; }
.fill-combo { margin: 8px 0 0 12px; width: 129px; height: 31px; display: flex; border: 1px solid #adadad; background: #fff; }
.fill-swatch { width: 107px; background: #d6dce5; border: 1px dotted #000; box-shadow: inset 0 0 0 2px #fff; }
.drop { margin-left: auto; align-self: stretch; width: 21px; background: #e1e1e1; border: 1px solid #adadad; display: flex; align-items: center; justify-content: center; flex: none; }
.dchev { width: 10px; height: 6px; }
.frow { display: flex; align-items: center; padding-left: 13px; }
.frow label { width: 65px; white-space: pre; font-size: 15px; padding-bottom: 2px; }
.frow-style { margin-top: 8px; }
.frow-color { margin-top: 5px; }
.dis { color: #8a8a8a; }
.combo { position: relative; background: #fff; border: 1px solid #adadad; display: flex; align-items: center; }
.combo-style { width: 143px; height: 28px; padding-left: 2px; }
.combo-color { width: 143px; height: 30px; color: #777; }
.combo-apply { width: 300px; height: 33px; margin-top: 4px; padding-left: 3px; }
.box { width: 20px; height: 20px; border: 1px solid #666; background: #fff; flex: none; }
.combo-text { margin-left: 8px; margin-top: 4px; font-size: 15px; }
.combo-auto { margin-left: 46px; font-size: 15px; padding-bottom: 2px; }
.combo-text2 { font-size: 15px; }
.preview { width: 146px; height: 156px; margin: 85px 0 0 83px; }
.apply-label { display: block; margin-top: 90px; margin-bottom: 2px; line-height: 18px; white-space: pre; font-size: 15px; }
.dlg-foot { display: flex; justify-content: flex-end; gap: 13px; padding: 15px 8px 0 0; }
.btn { width: 99px; height: 34px; background: #e1e1e1; border: 1px solid #adadad; font: inherit; color: #111; padding: 0 0 2px; font-size: 15px; }

/* annotations */
.redbox { position: absolute; z-index: 1; border: 7px solid #fd3c3c; }
.redbox-1 { left: 741px; top: 342px; width: 245px; height: 258px; }
.redbox-2 { left: 1015px; top: 897px; width: 226px; height: 114px; }
```
